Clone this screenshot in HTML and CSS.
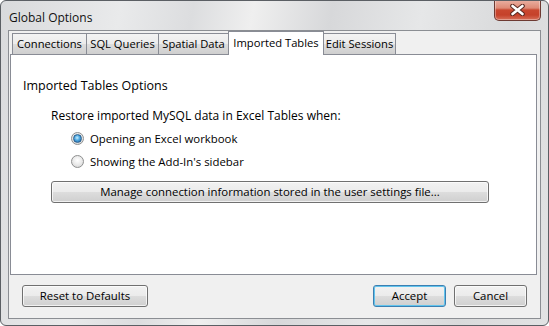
FILE: index.html
```html
<!DOCTYPE html>
<html lang="en">

<head>
    <meta charset="UTF-8">
    <meta name="viewport" content="width=device-width, initial-scale=1.0">
    <title>Global Options</title>
    <link rel="stylesheet" href="styles.css">
</head>

<body>
    <div class="window">
        <div class="titlebar">
            <span class="title">Global Options</span>
            <div class="close">
                <svg width="15" height="12" viewBox="0 0 15 12">
                    <path d="M2.5 2 L12.5 10 M12.5 2 L2.5 10" stroke="#5a2a22" stroke-width="4.6" stroke-linecap="round" />
                    <path d="M2.5 2 L12.5 10 M12.5 2 L2.5 10" stroke="#ffffff" stroke-width="2.6" stroke-linecap="round" />
                </svg>
            </div>
        </div>

        <div class="client">
            <div class="tabs">
                <div class="tab t1">Connections</div>
                <div class="tab t2">SQL Queries</div>
                <div class="tab t3">Spatial Data</div>
                <div class="tab t4 active">Imported Tables</div>
                <div class="tab t5">Edit Sessions</div>
            </div>
            <div class="panel">
                <div class="heading">Imported Tables Options</div>
                <div class="group">
                    <div class="label">Restore imported MySQL data in Excel Tables when:</div>
                    <div class="options">
                        <div class="option"><span class="radio checked"></span>Opening an Excel workbook</div>
                        <div class="option"><span class="radio"></span>Showing the Add-In's sidebar</div>
                    </div>
                    <div class="btn wide">Manage connection information stored in the user settings file...</div>
                </div>
            </div>
            <div class="footer">
                <div class="btn reset">Reset to Defaults</div>
                <div class="actions">
                    <div class="btn small default">Accept</div>
                    <div class="btn small">Cancel</div>
                </div>
            </div>
        </div>
    </div>
</body>

</html>
```

FILE: styles.css
```css
* {
    margin: 0;
    padding: 0;
    box-sizing: border-box;
}

body {
    background: #ffffff;
    font-family: 'Open Sans', 'Noto Sans', sans-serif;
    font-size: 12px;
    color: #000;
}

.window {
    width: 549px;
    height: 326px;
    border: 1px solid #5b5f64;
    border-radius: 6px;
    background: linear-gradient(100deg, #d9dadc 0%, #e9eaeb 20%, #dcdddf 32%, #efefef 42%, #d7d8da 55%, #e6e7e8 70%, #d9dadb 85%, #e2e3e4 100%);
    display: flex;
    flex-direction: column;
    overflow: hidden;
}

.titlebar {
    height: 29px;
    display: flex;
    justify-content: space-between;
    align-items: flex-start;
    padding: 0 7px 0 8px;
}

.title {
    line-height: 29px;
    padding-top: 2px;
    color: #111;
}

.close {
    width: 47px;
    height: 21px;
    margin-top: -1px;
    border: 1px solid #6d3a32;
    border-top: none;
    border-radius: 0 0 5px 5px;
    background: linear-gradient(#eab1a3 0%, #de8a76 40%, #c9472f 50%, #c5412a 75%, #d7705a 100%);
    box-shadow: inset 0 0 0 1px rgba(255, 255, 255, 0.35);
    display: flex;
    justify-content: center;
    align-items: center;
}

.client {
    flex: 1;
    margin: 0 7px 6px 7px;
    border: 1px solid #8b8e93;
    background: #f0f0f0;
    display: flex;
    flex-direction: column;
}

.tabs {
    display: flex;
    align-items: flex-end;
    height: 23px;
    padding-left: 2px;
    margin-left: 1px;
}

.tab {
    height: 21px;
    border: 1px solid #898c95;
    border-bottom: none;
    margin-right: -1px;
    background: linear-gradient(#f3f3f3 0%, #ebebeb 50%, #dddddd 51%, #cfcfcf 100%);
    text-align: center;
    line-height: 20px;
    font-size: 11.2px;
    white-space: nowrap;
    color: #000;
}

.t1 {
    width: 75px;
}

.t2 {
    width: 73px;
}

.t3 {
    width: 71px;
}

.t4 {
    width: 96px;
}

.t5 {
    width: 73px;
}

.tab.active {
    height: 24px;
    margin-bottom: -1px;
    background: #ffffff;
    position: relative;
    z-index: 1;
    line-height: 22px;
    padding-bottom: 2px;
}

.panel {
    height: 221px;
    margin: 0 3px 0 1px;
    border: 1px solid #898c95;
    background: #ffffff;
    padding: 23px 12px 0 12px;
}

.heading {
    line-height: 16px;
    font-size: 12.5px;
}

.group {
    padding: 14px 0 0 28px;
}

.label {
    line-height: 16px;
}

.options {
    margin-top: 3px;
}

.option {
    display: flex;
    align-items: center;
    height: 23px;
    padding-left: 20px;
    font-size: 11.4px;
}

.radio {
    width: 13px;
    height: 13px;
    border-radius: 50%;
    border: 1px solid #8e8f8f;
    background: radial-gradient(circle at 50% 40%, #ffffff 0%, #eaeaea 50%, #cfcfcf 100%);
    margin-right: 6px;
    display: flex;
    justify-content: center;
    align-items: center;
}

.radio.checked::after {
    content: "";
    width: 7px;
    height: 7px;
    border-radius: 50%;
    border: 1px solid #2b5f8d;
    background: radial-gradient(circle at 45% 40%, #c8efff 0%, #4aa6e0 45%, #1e5c98 100%);
}

.btn {
    height: 22px;
    border: 1px solid #707070;
    border-radius: 3px;
    background: linear-gradient(#f2f2f2 0%, #ebebeb 50%, #dddddd 51%, #cfcfcf 100%);
    box-shadow: inset 0 0 0 1px rgba(255, 255, 255, 0.7);
    text-align: center;
    line-height: 20px;
    font-size: 11.4px;
    white-space: nowrap;
    color: #000;
}

.wide {
    width: 438px;
    margin-top: 8px;
}

.footer {
    flex: 1;
    display: flex;
    justify-content: space-between;
    align-items: flex-start;
    padding: 10px 13px 0 13px;
}

.reset {
    width: 126px;
}

.actions {
    display: flex;
    gap: 8px;
}

.small {
    width: 73px;
}

.default {
    border-color: #3c7fb1;
    box-shadow: inset 0 0 0 1px #62c4ed;
}
```
